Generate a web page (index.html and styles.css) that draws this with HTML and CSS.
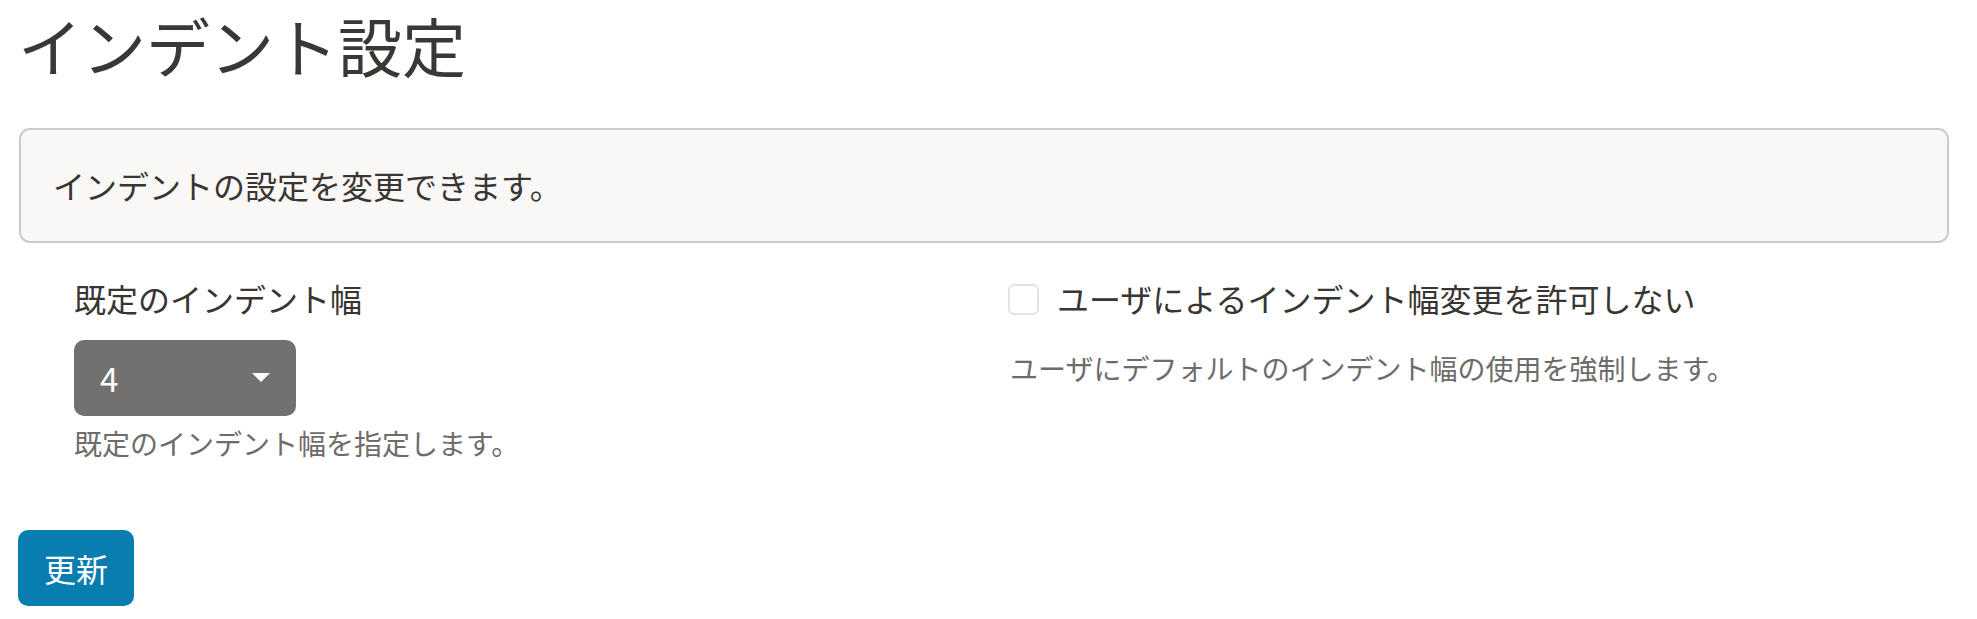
FILE: index.html
```html
<!DOCTYPE html>
<html lang="ja">
<head>
    <meta charset="utf-8">
    <title>インデント設定</title>
    <link rel="stylesheet" href="styles.css">
</head>
<body>
<div class="page">
    <h1 class="page-title">インデント設定</h1>

    <div class="notice">インデントの設定を変更できます。</div>

    <form class="settings">
        <div class="field">
            <label class="field-label" for="indentWidth">既定のインデント幅</label>
            <div class="select-wrap">
                <select id="indentWidth" class="select">
                    <option>2</option>
                    <option selected>4</option>
                    <option>8</option>
                </select>
                <svg class="select-arrow" width="18" height="9" viewBox="0 0 18 9"><path d="M0 0H18L9 9Z" fill="#fff"/></svg>
            </div>
            <p class="help">既定のインデント幅を指定します。</p>
        </div>
        <div class="field">
            <label class="check-row">
                <input type="checkbox" class="checkbox">
                <span>ユーザによるインデント幅変更を許可しない</span>
            </label>
            <p class="help help-right">ユーザにデフォルトのインデント幅の使用を強制します。</p>
        </div>
    </form>

    <button class="btn" type="button">更新</button>
</div>
</body>
</html>
```

FILE: styles.css
```css
body {
    margin: 0;
    background: #fff;
    font-family: "Noto Sans CJK JP", "Noto Sans", sans-serif;
    color: #383532;
}
.page {
    padding: 4px 28px 0 18px;
}
.page-title {
    margin: 0 0 44px 0;
    font-size: 64px;
    line-height: 80px;
    font-weight: 400;
    color: #3b3734;
}
.notice {
    margin-left: 1px;
    border: 2px solid #cdcbc9;
    border-radius: 11px;
    background: #f9f8f6;
    padding: 32px;
    font-size: 32px;
    line-height: 47px;
}
.settings {
    display: grid;
    grid-template-columns: 934px 1fr;
    padding-left: 56px;
    margin-top: 31px;
}
.field-label {
    display: block;
    font-size: 32px;
    line-height: 48px;
}
.select-wrap {
    position: relative;
    width: 222px;
    margin-top: 18px;
}
.select {
    display: block;
    width: 222px;
    height: 76px;
    border: none;
    border-radius: 10px;
    background: #73716f;
    color: #fff;
    font-family: inherit;
    font-size: 33px;
    padding: 0 0 0 26px;
    appearance: none;
    -webkit-appearance: none;
}
.select-arrow {
    position: absolute;
    right: 26px;
    top: 33px;
    pointer-events: none;
}
.help {
    margin: 6px 0 0 0;
    font-size: 28px;
    line-height: 42px;
    color: #6e6c6a;
}
.help-right {
    margin-top: 25px;
    padding-left: 2px;
}
.check-row {
    display: flex;
    align-items: center;
    font-size: 32px;
    line-height: 48px;
}
.checkbox {
    appearance: none;
    -webkit-appearance: none;
    width: 31px;
    height: 31px;
    margin: 2px 18px 0 0;
    border: 2px solid #e3e2e1;
    border-radius: 6px;
    background: #fff;
}
.btn {
    margin-top: 66px;
    border: none;
    border-radius: 10px;
    background: #0a7db0;
    color: #fff;
    font-family: inherit;
    font-size: 32px;
    line-height: 48px;
    padding: 14px 26px;
    cursor: pointer;
}
```
